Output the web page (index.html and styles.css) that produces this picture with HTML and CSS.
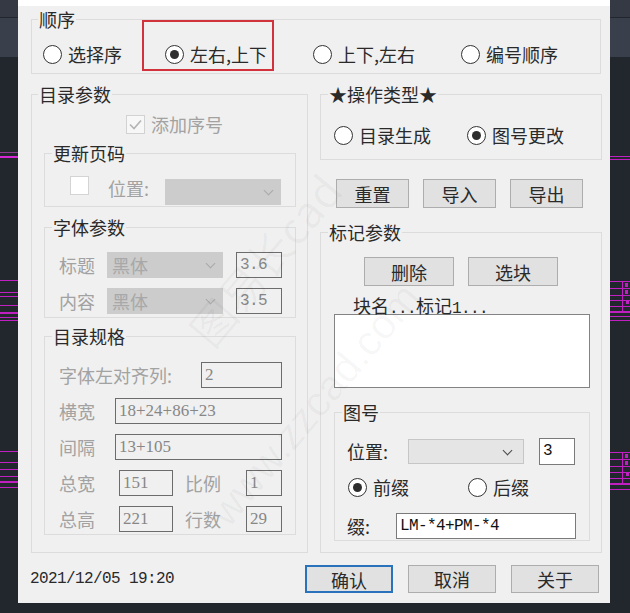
FILE: index.html
```html
<!DOCTYPE html>
<html lang="zh-CN">
<head>
<meta charset="utf-8">
<title>目录</title>
<link rel="stylesheet" href="styles.css">
</head>
<body>
<svg class="cad" width="630" height="613" viewBox="0 0 630 613" aria-hidden="true">
  <rect x="0" y="0" width="630" height="613" fill="#22262d"/>
  <rect x="0" y="0" width="630" height="17" fill="#343944"/>
  <rect x="0" y="18" width="630" height="39" fill="#3a404b"/>
  <g stroke="#c21fc2" stroke-width="1">
    <line x1="0" y1="152.5" x2="18" y2="152.5" stroke="#8a3a8f"/>
    <line x1="0" y1="157" x2="18" y2="157" stroke="#d626d6" stroke-width="2"/>
    <line x1="0" y1="280.5" x2="18" y2="280.5"/>
    <line x1="0" y1="292.5" x2="18" y2="292.5"/>
    <line x1="0" y1="296.5" x2="18" y2="296.5"/>
    <line x1="0" y1="305.5" x2="18" y2="305.5"/>
    <line x1="0" y1="313" x2="18" y2="313" stroke-width="2"/>
    <line x1="0" y1="317.5" x2="18" y2="317.5"/>
    <line x1="0" y1="320.5" x2="18" y2="320.5"/>
    <line x1="0" y1="451.5" x2="18" y2="451.5"/>
    <line x1="0" y1="462.5" x2="18" y2="462.5"/>
    <line x1="0" y1="469.5" x2="18" y2="469.5"/>
    <line x1="0" y1="476.5" x2="18" y2="476.5"/>
    <line x1="0" y1="482" x2="18" y2="482" stroke-width="2"/>
    <line x1="0" y1="487.5" x2="18" y2="487.5"/>
    <line x1="610" y1="156.5" x2="630" y2="156.5"/>
    <line x1="610" y1="159.5" x2="630" y2="159.5"/>
    <line x1="610" y1="281.5" x2="630" y2="281.5"/>
    <line x1="610" y1="288.5" x2="630" y2="288.5"/>
    <line x1="610" y1="295.5" x2="630" y2="295.5"/>
    <line x1="610" y1="300.5" x2="630" y2="300.5"/>
    <line x1="610" y1="306.5" x2="630" y2="306.5"/>
    <line x1="610" y1="312" x2="630" y2="312" stroke-width="2"/>
    <line x1="610" y1="316.5" x2="630" y2="316.5"/>
    <line x1="610" y1="320.5" x2="630" y2="320.5"/>
    <line x1="622.5" y1="281" x2="622.5" y2="313"/>
    <line x1="610" y1="452.5" x2="630" y2="452.5"/>
    <line x1="610" y1="459.5" x2="630" y2="459.5"/>
    <line x1="610" y1="466.5" x2="630" y2="466.5"/>
    <line x1="610" y1="472.5" x2="630" y2="472.5"/>
    <line x1="610" y1="478.5" x2="630" y2="478.5"/>
    <line x1="610" y1="484" x2="630" y2="484" stroke-width="2"/>
    <line x1="610" y1="489.5" x2="630" y2="489.5"/>
    <line x1="622.5" y1="452" x2="622.5" y2="484"/>
  </g>
  <g fill="#c21fc2">
    <rect x="625" y="283" width="3" height="4"/>
    <rect x="625" y="290" width="3" height="4"/>
    <rect x="626" y="301" width="3" height="3"/>
    <rect x="625" y="454" width="3" height="4"/>
    <rect x="625" y="461" width="3" height="4"/>
    <rect x="626" y="473" width="3" height="3"/>
  </g>
</svg>

<div class="dialog">
  <fieldset class="grp order">
    <legend>顺序</legend>
    <div class="order-row">
      <label class="radio"><span class="dot"></span>选择序</label>
      <label class="radio"><span class="dot on"></span>左右,上下</label>
      <label class="radio"><span class="dot"></span>上下,左右</label>
      <label class="radio"><span class="dot"></span>编号顺序</label>
    </div>
    <span class="mark"></span>
  </fieldset>

  <div class="main">
    <fieldset class="grp catalog">
      <legend>目录参数</legend>
      <div class="addno"><span class="check checked"><svg viewBox="0 0 19 19" width="19" height="19"><path d="M4 9.5 L8 13.5 L15 5.5" fill="none" stroke="#b4b4b4" stroke-width="1.6"/></svg></span><span class="dis">添加序号</span></div>

      <fieldset class="grp sub page">
        <legend>更新页码</legend>
        <div class="page-row">
          <span class="check"></span>
          <span class="dis pos">位置:</span>
          <span class="combo dis-combo w116"><span class="chev"></span></span>
        </div>
      </fieldset>

      <fieldset class="grp sub font">
        <legend>字体参数</legend>
        <div class="frow">
          <span class="dis flabel">标题</span>
          <span class="combo dis-combo w116"><span class="ctext">黑体</span><span class="chev"></span></span>
          <span class="box mono fbox">3.6</span>
        </div>
        <div class="frow">
          <span class="dis flabel">内容</span>
          <span class="combo dis-combo w116"><span class="ctext">黑体</span><span class="chev"></span></span>
          <span class="box mono fbox">3.5</span>
        </div>
      </fieldset>

      <fieldset class="grp sub spec">
        <legend>目录规格</legend>
        <div class="srow">
          <span class="dis slabel-wide">字体左对齐列:</span>
          <span class="box num w81">2</span>
        </div>
        <div class="srow">
          <span class="dis slabel">横宽</span>
          <span class="box num w167">18+24+86+23</span>
        </div>
        <div class="srow">
          <span class="dis slabel">间隔</span>
          <span class="box num w167">13+105</span>
        </div>
        <div class="srow">
          <span class="dis slabel">总宽</span>
          <span class="box num w54 gap4">151</span>
          <span class="dis slabel2">比例</span>
          <span class="box num w36">1</span>
        </div>
        <div class="srow">
          <span class="dis slabel">总高</span>
          <span class="box num w54 gap4">221</span>
          <span class="dis slabel2">行数</span>
          <span class="box num w36">29</span>
        </div>
      </fieldset>
    </fieldset>

    <div class="rightcol">
      <fieldset class="grp optype">
        <legend>★操作类型★</legend>
        <div class="op-row">
          <label class="radio w133"><span class="dot"></span>目录生成</label>
          <label class="radio"><span class="dot on"></span>图号更改</label>
        </div>
      </fieldset>

      <div class="btnrow">
        <button class="btn w73">重置</button>
        <button class="btn w73">导入</button>
        <button class="btn w73">导出</button>
      </div>

      <fieldset class="grp marks">
        <legend>标记参数</legend>
        <div class="btnrow2">
          <button class="btn w90">删除</button>
          <button class="btn w90">选块</button>
        </div>
        <div class="blkname">块名<span class="mono">...</span>标记<span class="mono">1...</span></div>
        <div class="listbox"></div>

        <fieldset class="grp drawno">
          <legend>图号</legend>
          <div class="drow">
            <span class="dlabel">位置:</span>
            <span class="combo en-combo"><span class="chev dark"></span></span>
            <span class="box white mono w36 h27">3</span>
          </div>
          <div class="drow radios">
            <label class="radio w120"><span class="dot on"></span>前缀</label>
            <label class="radio"><span class="dot"></span>后缀</label>
          </div>
          <div class="drow">
            <span class="dlabel short">缀:</span>
            <span class="box white mono w180">LM-*4+PM-*4</span>
          </div>
        </fieldset>
      </fieldset>
    </div>
  </div>

  <div class="footer">
    <span class="date">2021/12/05 19:20</span>
    <button class="btn fbtn primary">确认</button>
    <button class="btn fbtn">取消</button>
    <button class="btn fbtn">关于</button>
  </div>

  <div class="wm wm1">图易长cad</div>
  <div class="wm wm2">www.zzcad.com</div>
</div>
</body>
</html>
```

FILE: styles.css
```css
html, body {
  margin: 0;
  padding: 0;
}
body {
  width: 630px;
  height: 613px;
  overflow: hidden;
  position: relative;
  background: #22262d;
  font-family: "Noto Sans CJK SC", "Noto Sans CJK JP", sans-serif;
  font-size: 18px;
  color: #2a2a2a;
}
.cad {
  position: absolute;
  left: 0;
  top: 0;
}
.dialog {
  position: relative;
  margin-left: 18px;
  width: 592px;
  height: 603px;
  box-sizing: border-box;
  background: #f0f0f0;
  border-top: 6px solid #ffffff;
  padding: 3px 9px 0 13px;
  overflow: hidden;
}

/* group boxes */
.grp {
  margin: 0;
  padding: 0;
  min-width: 0;
  border: 1px solid #dcdcdc;
  border-radius: 0;
}
.grp > legend {
  margin-left: 6px;
  padding: 0 1px;
  font-size: 18px;
  line-height: 20px;
  color: #2a2a2a;
}

/* radio */
.radio {
  display: flex;
  align-items: center;
  gap: 6px;
  height: 22px;
  line-height: 22px;
  color: #2a2a2a;
  white-space: nowrap;
}
.dot {
  width: 19px;
  height: 19px;
  box-sizing: border-box;
  border: 1px solid #333;
  border-radius: 50%;
  background: #fff;
  display: inline-flex;
  align-items: center;
  justify-content: center;
  flex: none;
}
.dot.on::after {
  content: "";
  width: 9px;
  height: 9px;
  border-radius: 50%;
  background: #2e2e2e;
}

/* order group */
.order {
  position: relative;
}
.order-row {
  display: grid;
  grid-template-columns: 122px 148px 148px auto;
  padding: 14px 0 8px 11px;
}
.mark {
  position: absolute;
  left: 110px;
  top: -9px;
  width: 128px;
  height: 47px;
  border: 2px solid #d1323b;
}

/* main two columns */
.main {
  display: grid;
  grid-template-columns: 277px 282px;
  column-gap: 12px;
  margin-top: 10px;
  height: 469px;
}
.catalog {
  padding: 0 11px 0 12px;
}
.catalog > legend {
  margin-left: -6px;
}
.addno {
  display: flex;
  align-items: center;
  gap: 6px;
  margin: 10px 0 0 82px;
  height: 20px;
}
.check {
  width: 19px;
  height: 19px;
  box-sizing: border-box;
  border: 1px solid #d4d4d4;
  background: #fff;
  display: inline-block;
  flex: none;
}
.check.checked {
  border-color: #d2d2d2;
  background: #f7f7f7;
}
.check svg {
  display: block;
  margin: -1px;
}
.dis {
  color: #a2a2a2;
}

.sub > legend {
  margin-left: 7px;
}
.page {
  margin-top: 9px;
}
.page-row {
  display: flex;
  align-items: flex-start;
  padding: 13px 0 1px 25px;
}
.page-row .pos {
  margin: 2px 0 0 19px;
  line-height: 20px;
  width: 57px;
}
.page-row .combo {
  margin-top: 3px;
}

.combo {
  position: relative;
  display: inline-flex;
  align-items: center;
  height: 26px;
  box-sizing: border-box;
  flex: none;
}
.w116 { width: 116px; }
.dis-combo {
  background: #cccccc;
  color: #a8a8a8;
}
.ctext {
  padding-left: 5px;
  line-height: 26px;
}
.chev {
  position: absolute;
  right: 9px;
  top: 8px;
  width: 6px;
  height: 6px;
  border-right: 1px solid #a9a9a9;
  border-bottom: 1px solid #a9a9a9;
  transform: rotate(45deg);
}
.chev.dark {
  border-color: #4a4a4a;
  right: 12px;
  top: 7px;
}

.font {
  margin-top: 10px;
  padding-bottom: 3px;
}
.frow {
  display: flex;
  align-items: center;
  height: 26px;
  padding-left: 14px;
  margin-top: 10px;
}
.font .frow:first-of-type {
  margin-top: 15px;
}
.flabel {
  width: 48px;
  line-height: 26px;
}
.box {
  display: inline-flex;
  align-items: center;
  height: 26px;
  box-sizing: border-box;
  border: 1px solid #6c6c6c;
  padding-left: 3px;
  color: #878787;
  flex: none;
  white-space: nowrap;
}
.mono {
  font-family: "Liberation Mono", "DejaVu Sans Mono", monospace;
  font-size: 16px;
  letter-spacing: -0.6px;
}
.num {
  font-family: "Liberation Serif", serif;
  font-size: 17px;
}
.fbox {
  width: 46px;
  margin-left: 13px;
}

.spec {
  margin-top: 8px;
  padding-bottom: 2px;
}
.srow {
  display: flex;
  align-items: center;
  height: 26px;
  padding-left: 14px;
  margin-top: 10px;
}
.spec .srow:first-of-type {
  margin-top: 16px;
}
.slabel-wide {
  width: 142px;
  line-height: 26px;
}
.slabel {
  width: 56px;
  line-height: 26px;
}
.slabel2 {
  width: 61px;
  margin-left: 12px;
  line-height: 26px;
}
.gap4 { margin-left: 4px; }
.w81 { width: 81px; }
.w167 { width: 167px; }
.w54 { width: 54px; }
.w36 { width: 36px; }
.w180 { width: 180px; }
.h27 { height: 27px; }

/* right column */
.rightcol {
  display: flex;
  flex-direction: column;
}
.optype {
  padding: 20px 0 13px 13px;
}
.optype > legend,
.marks > legend {
  margin-left: -6px;
}
.op-row {
  display: flex;
}
.w133 { width: 133px; }
.w120 { width: 120px; }

.btn {
  font-family: "Noto Sans CJK SC", "Noto Sans CJK JP", sans-serif;
  font-size: 18px;
  color: #2a2a2a;
  background: #e1e1e1;
  border: 1px solid #adadad;
  border-radius: 0;
  height: 29px;
  padding: 0;
  line-height: 26px;
  box-sizing: border-box;
  flex: none;
}
.w73 { width: 73px; }
.w90 { width: 90px; }
.btnrow {
  display: flex;
  gap: 14px;
  margin: 19px 0 0 16px;
}
.marks {
  margin-top: 14px;
  flex: 1;
  padding: 0 11px 0 13px;
}
.btnrow2 {
  display: flex;
  gap: 14px;
  margin: 15px 0 0 30px;
}
.blkname {
  margin: 10px 0 0 19px;
  line-height: 18px;
  height: 18px;
  color: #2a2a2a;
}
.listbox {
  width: 256px;
  height: 74px;
  box-sizing: border-box;
  background: #fff;
  border: 1px solid #838383;
}
.drawno {
  margin-top: 14px;
  padding: 0 0 1px 12px;
}
.drawno > legend {
  margin-left: -5px;
}
.drow {
  display: flex;
  align-items: center;
  height: 26px;
  margin-top: 12px;
}
.drawno .drow:first-of-type {
  margin-top: 16px;
}
.drow.radios {
  height: 22px;
  padding-left: 1px;
}
.drow.radios + .drow {
  margin-top: 15px;
}
.dlabel {
  width: 61px;
  line-height: 26px;
  color: #2a2a2a;
}
.dlabel.short {
  width: 49px;
}
.en-combo {
  width: 116px;
  height: 25px;
  background: #e5e5e5;
  border: 1px solid #c6c6c6;
}
.box.white {
  background: #fff;
  border-color: #7a7a7a;
  color: #111;
}
.drow .box.w36 {
  margin-left: 15px;
}

/* footer */
.footer {
  display: flex;
  align-items: center;
  margin-top: 12px;
  height: 28px;
  padding-right: 2px;
}
.date {
  flex: 1;
  font-family: "Liberation Mono", "DejaVu Sans Mono", monospace;
  font-size: 16px;
  letter-spacing: -0.6px;
  color: #2a2a2a;
  margin-left: -1px;
}
.fbtn {
  width: 88px;
  height: 28px;
  margin-left: 15px;
}
.fbtn.primary {
  border: 2px solid #2a72bb;
  margin-left: 0;
}

/* watermark */
.wm {
  position: absolute;
  color: rgba(0, 0, 0, 0.035);
  white-space: nowrap;
  pointer-events: none;
  transform-origin: left center;
  transform: rotate(-50deg);
  font-family: "Noto Sans CJK SC", sans-serif;
}
.wm1 {
  left: 180px;
  top: 300px;
  font-size: 44px;
}
.wm2 {
  left: 200px;
  top: 490px;
  font-size: 42px;
  font-family: "Liberation Sans", sans-serif;
}
```
